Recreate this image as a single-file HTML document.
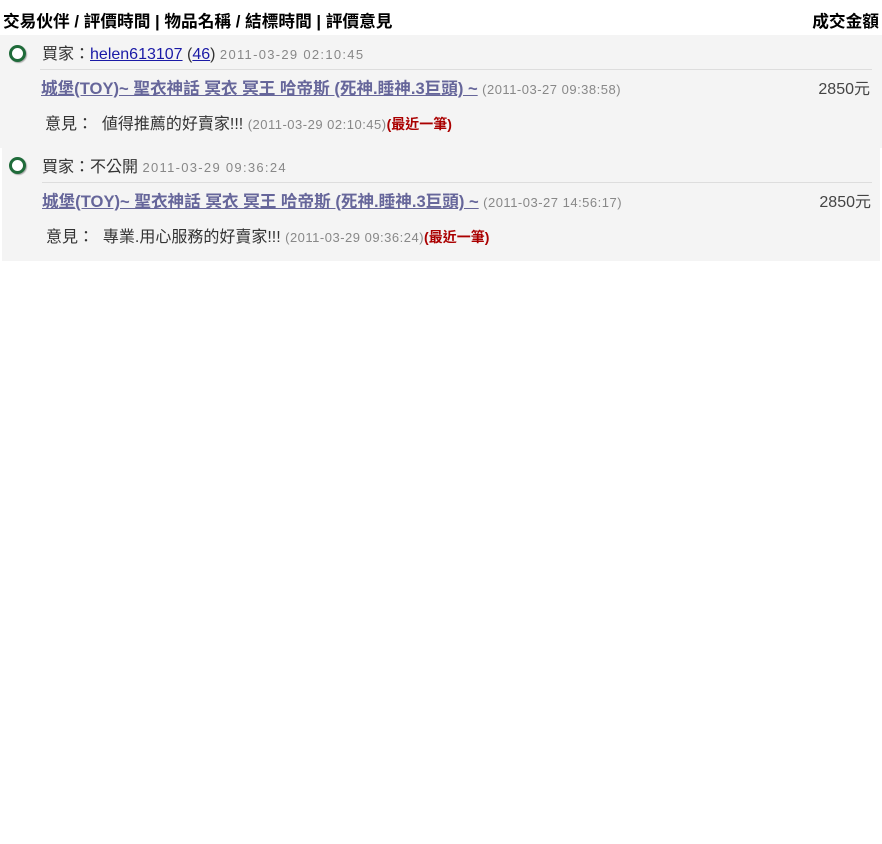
<!DOCTYPE html>
<html><head><meta charset="utf-8"><style>
body{margin:0;background:#fff;font-family:"Liberation Sans","Noto Sans CJK TC",sans-serif;width:882px;height:844px;position:relative;overflow:hidden}
.a{position:absolute;white-space:nowrap}
.hd{font-weight:bold;font-size:16.7px;color:#000;top:8px}
.blk{position:absolute;background:#f4f4f4}
.circ{position:absolute;width:11px;height:11px;border:3px solid #1f6b3a;border-radius:50%;background:#fff;box-shadow:1px 1px 1px #aaa}
.t14{font-size:16px;color:#333}
.g{font-size:13px;color:#888;letter-spacing:.5px}
.g2{letter-spacing:1.3px}
.ti{font-size:16.6px;font-weight:bold;color:#66669a;text-decoration:underline}
.pr{font-size:16px;color:#444}
.red{font-size:14px;font-weight:bold;color:#a00}
.ln{position:absolute;height:1px;background:#ddd}
a{color:#1a1aa6;text-decoration:underline}
</style></head><body>
<div class="a hd" style="left:3px">交易伙伴 / 評價時間 | 物品名稱 / 結標時間 | 評價意見</div>
<div class="a hd" style="right:3px">成交金額</div>

<div class="blk" style="left:0;top:35px;width:882px;height:113px"></div>
<div class="circ" style="left:9px;top:45px"></div>
<div class="a t14" style="left:42px;top:40px">買家：<a>helen613107</a> (<a>46</a>) <span class="g g2">2011-03-29 02:10:45</span></div>
<div class="ln" style="left:40px;top:69px;width:832px"></div>
<div class="a" style="left:41px;top:75px"><span class="ti">城堡(TOY)~ 聖衣神話 冥衣 冥王 哈帝斯 (死神.睡神.3巨頭) ~</span> <span class="g">(2011-03-27 09:38:58)</span></div>
<div class="a pr" style="right:12px;top:75px">2850元</div>
<div class="a t14" style="left:45px;top:110px">意見：&nbsp; 値得推薦的好賣家!!! <span class="g">(2011-03-29 02:10:45)</span><span class="red">(最近一筆)</span></div>

<div class="blk" style="left:2px;top:148px;width:878px;height:113px"></div>
<div class="circ" style="left:9px;top:157px"></div>
<div class="a t14" style="left:42px;top:153px">買家：不公開 <span class="g g2">2011-03-29 09:36:24</span></div>
<div class="ln" style="left:42px;top:182px;width:830px"></div>
<div class="a" style="left:42px;top:188px"><span class="ti">城堡(TOY)~ 聖衣神話 冥衣 冥王 哈帝斯 (死神.睡神.3巨頭) ~</span> <span class="g">(2011-03-27 14:56:17)</span></div>
<div class="a pr" style="right:11px;top:188px">2850元</div>
<div class="a t14" style="left:46px;top:223px">意見：&nbsp; 專業.用心服務的好賣家!!! <span class="g">(2011-03-29 09:36:24)</span><span class="red">(最近一筆)</span></div>
</body></html>
